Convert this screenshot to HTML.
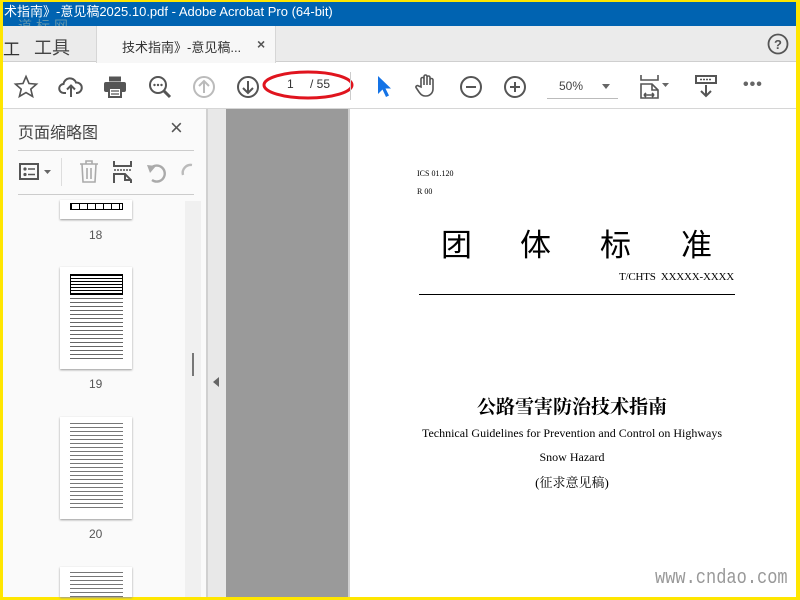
<!DOCTYPE html>
<html><head><meta charset="utf-8"><style>
*{margin:0;padding:0;box-sizing:border-box}
body{width:800px;height:600px;overflow:hidden;background:#ffe600;position:relative;font-family:"Liberation Sans","Noto Sans CJK SC",sans-serif}
.a{position:absolute}
svg{position:absolute;overflow:visible}
.ic{fill:none;stroke:#555;stroke-width:2}
.t{font-family:"Liberation Serif","Noto Serif CJK SC",serif;color:#000}
</style></head><body>
<div class="a" style="left:3px;top:2px;width:793px;height:595px;background:#fff"></div>
<div class="a" style="left:3px;top:2px;width:793px;height:24px;background:#0063b1;color:#fff;font-size:13px;line-height:20px;padding-left:1px">术指南》-意见稿2025.10.pdf - Adobe Acrobat Pro (64-bit)</div>
<div class="a" style="left:18px;top:16px;color:#8aa;font-size:14px;letter-spacing:4px;opacity:.7">道标网</div>
<div class="a" style="left:3px;top:26px;width:793px;height:36px;background:#ebebeb;border-bottom:1px solid #cfcfcf"></div>
<div class="a" style="left:3px;top:35px;font-size:17px;color:#333">工</div>
<div class="a" style="left:34px;top:34px;font-size:18px;color:#444">工具</div>
<div class="a" style="left:96px;top:26px;width:180px;height:37px;background:#f7f7f7;border-left:1px solid #d6d6d6;border-right:1px solid #d6d6d6"></div>
<div class="a" style="left:122px;top:37px;font-size:13px;color:#333">技术指南》-意见稿...</div>
<div class="a" style="left:257px;top:36px;font-size:14px;color:#555;font-weight:bold">×</div>
<svg style="left:767px;top:33px" width="22" height="22"><circle cx="11" cy="11" r="9.5" class="ic" style="stroke-width:1.8"/><text x="11" y="16" font-size="13" font-weight="bold" text-anchor="middle" fill="#555" font-family="Liberation Sans">?</text></svg>
<div class="a" style="left:3px;top:63px;width:793px;height:46px;background:#fff;border-bottom:1px solid #d6d6d6"></div>
<svg style="left:14px;top:75px" width="24" height="24"><path class="ic" style="stroke-width:1.6" d="M12 1.5l3 7 7.5.6-5.7 5 1.8 7.4L12 17.6l-6.6 3.9 1.8-7.4-5.7-5 7.5-.6z"/></svg>
<svg style="left:59px;top:75px" width="24" height="24"><path class="ic" d="M7 18H5a4.5 4.5 0 0 1-.5-9 6.5 6.5 0 0 1 12.5-1.5A5 5 0 0 1 18 18h-1M12 22V11M8 14.5l4-4 4 4"/></svg>
<svg style="left:103px;top:75px" width="24" height="24"><rect x="6" y="1.5" width="12" height="5" fill="#555"/><rect x="1" y="7" width="22" height="10" rx="2" fill="#555"/><rect x="6" y="13" width="12" height="9" fill="#fff" stroke="#555" stroke-width="2"/><path d="M8 16h8M8 19h8" stroke="#555" stroke-width="1.3"/></svg>
<svg style="left:148px;top:75px" width="24" height="24"><circle cx="10" cy="10" r="8" class="ic"/><path class="ic" style="stroke-width:3" d="M16 16l6 6"/><circle cx="6.5" cy="10" r="1.2" fill="#555"/><circle cx="10" cy="10" r="1.2" fill="#555"/><circle cx="13.5" cy="10" r="1.2" fill="#555"/></svg>
<svg style="left:192px;top:75px" width="24" height="24"><circle cx="12" cy="12" r="10" class="ic" style="stroke:#bbb"/><path class="ic" style="stroke:#bbb" d="M12 18V6M7 11l5-5 5 5"/></svg>
<svg style="left:236px;top:75px" width="24" height="24"><circle cx="12" cy="12" r="10" class="ic"/><path class="ic" d="M12 6v12M7 13l5 5 5-5"/></svg>
<div class="a" style="left:287px;top:77px;font-size:12px;color:#333">1</div>
<div class="a" style="left:310px;top:77px;font-size:12px;color:#333">/ 55</div>
<svg style="left:262px;top:68px" width="94" height="34"><ellipse cx="46" cy="17" rx="44" ry="13" fill="none" stroke="#e0141e" stroke-width="3"/></svg>
<div class="a" style="left:350px;top:72px;width:1px;height:28px;background:#ccc"></div>
<svg style="left:376px;top:75px" width="16" height="24"><path d="M2 1v18l4.5-4.5 3.5 7.5 3-1.5-3.5-7H15z" fill="#1473e6"/></svg>
<svg style="left:415px;top:73px" width="24" height="26"><path class="ic" style="stroke-width:1.6" d="M6 14V6a1.5 1.5 0 0 1 3 0v6V3.5a1.5 1.5 0 0 1 3 0V12V4.5a1.5 1.5 0 0 1 3 0V12V7a1.5 1.5 0 0 1 3 0v9a7 7 0 0 1-7 7h-1c-3 0-4.5-2-6-4l-3-4.5a1.5 1.5 0 0 1 2.5-1.5z"/></svg>
<svg style="left:459px;top:75px" width="24" height="24"><circle cx="12" cy="12" r="10" class="ic"/><path class="ic" d="M7 12h10"/></svg>
<svg style="left:503px;top:75px" width="24" height="24"><circle cx="12" cy="12" r="10" class="ic"/><path class="ic" d="M7 12h10M12 7v10"/></svg>
<div class="a" style="left:559px;top:79px;font-size:12px;color:#444">50%</div>
<svg style="left:602px;top:84px" width="10" height="6"><path d="M0 0h8l-4 5z" fill="#666"/></svg>
<div class="a" style="left:547px;top:98px;width:71px;height:1px;background:#bbb"></div>
<svg style="left:640px;top:74px" width="34" height="26"><path class="ic" d="M1 1v5h17V1M1 24V10h11l6 6v8zM12 10v6h6M4 21h10M4 21l2-2M4 21l2 2M14 21l-2-2M14 21l-2 2" style="stroke-width:1.6"/><path d="M22 9h7l-3.5 4z" fill="#666"/></svg>
<svg style="left:695px;top:75px" width="24" height="24"><rect x="1" y="1" width="20" height="7" class="ic"/><path d="M5 4.5h12" stroke="#555" stroke-width="1.5" stroke-dasharray="2 1"/><path class="ic" d="M11 10v11M6 16l5 5 5-5"/></svg>
<div class="a" style="left:743px;top:76px;font-size:16px;color:#666;letter-spacing:1px;font-weight:bold">•••</div>
<div class="a" style="left:3px;top:109px;width:203px;height:488px;background:#fafafa"></div>
<div class="a" style="left:18px;top:119px;font-size:16px;color:#444">页面缩略图</div>
<div class="a" style="left:170px;top:115px;font-size:22px;color:#555">×</div>
<div class="a" style="left:18px;top:150px;width:176px;height:1px;background:#ccc"></div>
<div class="a" style="left:18px;top:194px;width:176px;height:1px;background:#ccc"></div>
<svg style="left:19px;top:163px" width="36" height="18"><rect x="1" y="1" width="18" height="15" class="ic"/><circle cx="6" cy="6" r="1.6" fill="#555"/><circle cx="6" cy="11.5" r="1.6" fill="#555"/><path d="M9 6h7M9 11.5h7" stroke="#555" stroke-width="1.6"/><path d="M25 7h7l-3.5 4z" fill="#666"/></svg>
<div class="a" style="left:61px;top:158px;width:1px;height:28px;background:#ddd"></div>
<svg style="left:79px;top:160px" width="22" height="24"><path class="ic" style="stroke:#aaa;stroke-width:1.6" d="M1 4h18M7 4V1h6v3M3 4l1 18h12l1-18M8 8v11M12 8v11"/></svg>
<svg style="left:113px;top:160px" width="20" height="24"><path class="ic" d="M1 1v5h17V1M1 23V14h11l6 6v3M12 14v6h6"/><path d="M1 10h17" stroke="#555" stroke-width="1.5" stroke-dasharray="2 1"/></svg>
<svg style="left:146px;top:161px" width="22" height="22"><path class="ic" style="stroke:#aaa;stroke-width:2.4" d="M5 7a8 8 0 1 1 1 12"/><path d="M1 4l9 1-6 7z" fill="#aaa"/></svg>
<svg style="left:180px;top:161px" width="14" height="22"><path class="ic" style="stroke:#bbb;stroke-width:2.4" d="M12 4a8 8 0 0 0-9 10"/></svg>
<div class="a" style="left:60px;top:200px;width:72px;height:19px;background:#fff;box-shadow:0 1px 2px #999"></div>
<div class="a" style="left:70px;top:203px;width:53px;height:7px;border:1px solid #000;background:repeating-linear-gradient(90deg,#000 0 1px,#fff 1px 8px)"></div>
<div class="a" style="left:89px;top:228px;font-size:12px;color:#555">18</div>
<div class="a" style="left:60px;top:267px;width:72px;height:102px;background:#fff;box-shadow:0 1px 2px #999"></div>
<div class="a" style="left:70px;top:274px;width:53px;height:21px;border:1.5px solid #000;background:repeating-linear-gradient(0deg,#000 0 1px,#fff 1px 3px)"></div>
<div class="a" style="left:70px;top:298px;width:53px;height:62px;background:repeating-linear-gradient(180deg,#666 0 1.2px,#fff 1.2px 4px)"></div>
<div class="a" style="left:89px;top:377px;font-size:12px;color:#555">19</div>
<div class="a" style="left:60px;top:417px;width:72px;height:102px;background:#fff;box-shadow:0 1px 2px #999"></div>
<div class="a" style="left:70px;top:423px;width:53px;height:85px;background:repeating-linear-gradient(180deg,#777 0 1px,#fff 1px 4px)"></div>
<div class="a" style="left:89px;top:527px;font-size:12px;color:#555">20</div>
<div class="a" style="left:60px;top:567px;width:72px;height:30px;background:#fff;box-shadow:0 1px 2px #999"></div>
<div class="a" style="left:70px;top:572px;width:53px;height:25px;background:repeating-linear-gradient(180deg,#777 0 1px,#fff 1px 4px)"></div>
<div class="a" style="left:185px;top:201px;width:16px;height:396px;background:#f0f0f0"></div>
<div class="a" style="left:192px;top:353px;width:2px;height:23px;background:#777"></div>
<div class="a" style="left:206px;top:109px;width:2px;height:488px;background:#d0d0d0"></div>
<div class="a" style="left:208px;top:109px;width:18px;height:488px;background:#e8e8e8"></div>
<svg style="left:213px;top:377px" width="8" height="10"><path d="M6 0v10L0 5z" fill="#666"/></svg>
<div class="a" style="left:226px;top:109px;width:122px;height:488px;background:#9a9a9a"></div>
<div class="a" style="left:348px;top:109px;width:2px;height:488px;background:#d0d0d0"></div>
<div class="a t" style="left:417px;top:169px;font-size:8px">ICS 01.120</div>
<div class="a t" style="left:417px;top:187px;font-size:8px">R 00</div>
<div class="a" style="left:441px;top:224px;font-size:31px;font-family:'Noto Sans CJK SC',sans-serif;line-height:38px;color:#000">团</div>
<div class="a" style="left:520px;top:224px;font-size:31px;font-family:'Noto Sans CJK SC',sans-serif;line-height:38px;color:#000">体</div>
<div class="a" style="left:600px;top:224px;font-size:31px;font-family:'Noto Sans CJK SC',sans-serif;line-height:38px;color:#000">标</div>
<div class="a" style="left:681px;top:224px;font-size:31px;font-family:'Noto Sans CJK SC',sans-serif;line-height:38px;color:#000">准</div>
<div class="a t" style="left:619px;top:271px;font-size:11px;white-space:pre;letter-spacing:-.2px">T/CHTS  XXXXX-XXXX</div>
<div class="a" style="left:419px;top:294px;width:316px;height:1px;background:#000"></div>
<div class="a" style="left:348px;top:392px;width:448px;text-align:center;font-size:19px;font-family:'Noto Serif CJK SC','Noto Sans CJK SC',serif;font-weight:bold;color:#000">公路雪害防治技术指南</div>
<div class="a t" style="left:348px;top:426px;width:448px;text-align:center;font-size:12px">Technical Guidelines for Prevention and Control on Highways</div>
<div class="a t" style="left:348px;top:450px;width:448px;text-align:center;font-size:12px">Snow Hazard</div>
<div class="a t" style="left:348px;top:472px;width:448px;text-align:center;font-size:13px">(征求意见稿)</div>
<div class="a" style="left:655px;top:567px;font-family:'Liberation Mono',monospace;font-size:20px;color:#999;transform:scaleX(.85);transform-origin:left">www.cndao.com</div>
</body></html>
